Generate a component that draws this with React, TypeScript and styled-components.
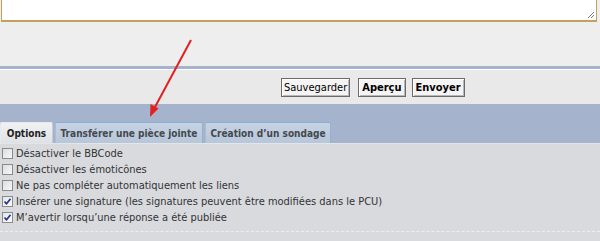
import React from "react";
import styled, { createGlobalStyle } from "styled-components";

const FONT = `"DejaVu Sans Condensed", "DejaVu Sans", Verdana, sans-serif`;

const Global = createGlobalStyle`
  html, body { margin: 0; padding: 0; }
  body {
    background: #eeeeee;
    font-family: ${FONT};
    font-stretch: condensed;
    width: 600px;
    height: 241px;
    overflow: hidden;
  }
`;

const Page = styled.div`
  position: relative;
  width: 600px;
  height: 241px;
  display: flex;
  flex-direction: column;
`;

const EditorArea = styled.div`
  height: 66px;
  background: #eeeeee;
  padding: 0 3px 0 1px;
  box-sizing: border-box;
`;

const TextBox = styled.div`
  position: relative;
  height: 22px;
  background: #ffffff;
  border: 1px solid #c4a05c;
  border-top: none;
  border-bottom-width: 2px;
  box-sizing: border-box;
`;

const Grip = styled.svg`
  position: absolute;
  right: 1px;
  bottom: 1px;
`;

const Rule = styled.div`
  height: 3px;
  background: #a5b3cd;
  border-bottom: 1px solid #ffffff;
`;

const ButtonBar = styled.div`
  height: 34px;
  background: #e9e9ea;
  display: flex;
  align-items: center;
  padding-left: 281px;
  gap: 6px;
`;

const Button = styled.button<{ $bold?: boolean; $extra?: number }>`
  height: 19px;
  margin: 0 ${(p) => p.$extra ?? 0}px 0 0;
  padding: 0 ${(p) => (p.$bold ? 3 : 2)}px;
  font-family: ${FONT};
  font-stretch: condensed;
  font-size: 11px;
  font-weight: ${(p) => (p.$bold ? 700 : 400)};
  color: #000;
  background: #f4f4f4;
  border: 1px solid #6b6b6b;
  box-shadow: inset 1px 1px 0 #ffffff, inset -1px -1px 0 #b8b8b8;
  line-height: 15px;
`;

const TabStrip = styled.div`
  height: 39px;
  background: #a6b3cd;
  display: flex;
  align-items: flex-end;
  gap: 2px;
`;

const Tab = styled.div<{ $active?: boolean; $w: number }>`
  width: ${(p) => p.$w}px;
  height: 21px;
  box-sizing: border-box;
  display: flex;
  align-items: center;
  justify-content: center;
  white-space: nowrap;
  font-size: 10px;
  font-weight: 700;
  color: ${(p) => (p.$active ? "#222" : "#44484f")};
  background: ${(p) =>
    p.$active
      ? "linear-gradient(#f1f2f4, #dfe1e4)"
      : "linear-gradient(#c6d3e3, #b7c6d8)"};
  border-top: 1px solid ${(p) => (p.$active ? "#e6e9ee" : "#86aed9")};
  border-left: 1px solid ${(p) => (p.$active ? "#e6e9ee" : "#a9bdd6")};
  border-right: 1px solid ${(p) => (p.$active ? "#c9ccd2" : "#9cb0c9")};
  border-radius: 2px 2px 0 0;
`;

const Options = styled.div`
  flex: 1;
  background: #d8dade;
  border-top: 1px solid #e2e5ea;
  padding-top: 1px;
`;

const Row = styled.label`
  display: flex;
  align-items: center;
  height: 16px;
  padding-left: 2px;
  gap: 3px;
  font-size: 11px;
  color: #333333;
  white-space: nowrap;
`;

const Box = styled.input`
  appearance: none;
  margin: 0;
  width: 11px;
  height: 11px;
  box-sizing: border-box;
  border: 1px solid #8a8a8a;
  background: linear-gradient(135deg, #dcdcdc, #f8f8f8);
  position: relative;
  flex: none;
  &:checked {
    background: linear-gradient(135deg, #e4e4e4, #ffffff);
  }
`;

const CheckWrap = styled.span`
  position: relative;
  display: flex;
  width: 11px;
  height: 11px;
`;

const Tick = styled.svg`
  position: absolute;
  left: 2px;
  top: 2px;
  pointer-events: none;
`;

const Dashed = styled.div`
  margin-top: 6px;
  border-bottom: 1px dashed #eceef1;
`;

const Arrow = styled.svg`
  position: absolute;
  left: 0;
  top: 0;
  pointer-events: none;
`;

const items = [
  { label: "Désactiver le BBCode", checked: false },
  { label: "Désactiver les émoticônes", checked: false },
  { label: "Ne pas compléter automatiquement les liens", checked: false },
  {
    label:
      "Insérer une signature (les signatures peuvent être modifiées dans le PCU)",
    checked: true,
  },
  { label: "M’avertir lorsqu’une réponse a été publiée", checked: true },
];

export default function App() {
  return (
    <Page>
      <Global />
      <EditorArea>
        <TextBox>
          <Grip width="8" height="8" viewBox="0 0 8 8">
            <path d="M1 7 L7 1 M4 7 L7 4" stroke="#777" strokeWidth="1" />
          </Grip>
        </TextBox>
      </EditorArea>
      <Rule />
      <ButtonBar>
        <Button $extra={2}>Sauvegarder</Button>
        <Button $bold>Aperçu</Button>
        <Button $bold>Envoyer</Button>
      </ButtonBar>
      <TabStrip>
        <Tab $active $w={53}>Options</Tab>
        <Tab $w={148}>Transférer une pièce jointe</Tab>
        <Tab $w={126}>Création d’un sondage</Tab>
      </TabStrip>
      <Options>
        {items.map((it) => (
          <Row key={it.label}>
            <CheckWrap>
              <Box type="checkbox" defaultChecked={it.checked} />
              {it.checked && (
                <Tick width="7" height="7" viewBox="0 0 7 7">
                  <path
                    d="M0.5 3.5 L2.5 5.8 L6.5 0.8"
                    fill="none"
                    stroke="#21309a"
                    strokeWidth="1.6"
                  />
                </Tick>
              )}
            </CheckWrap>
            {it.label}
          </Row>
        ))}
        <Dashed />
      </Options>
      <Arrow width="600" height="241" viewBox="0 0 600 241">
        <line x1="191" y1="40" x2="155" y2="107" stroke="#e32020" strokeWidth="2" />
        <polygon points="150,117 150.5,104 158.5,108.5" fill="#e32020" />
      </Arrow>
    </Page>
  );
}
